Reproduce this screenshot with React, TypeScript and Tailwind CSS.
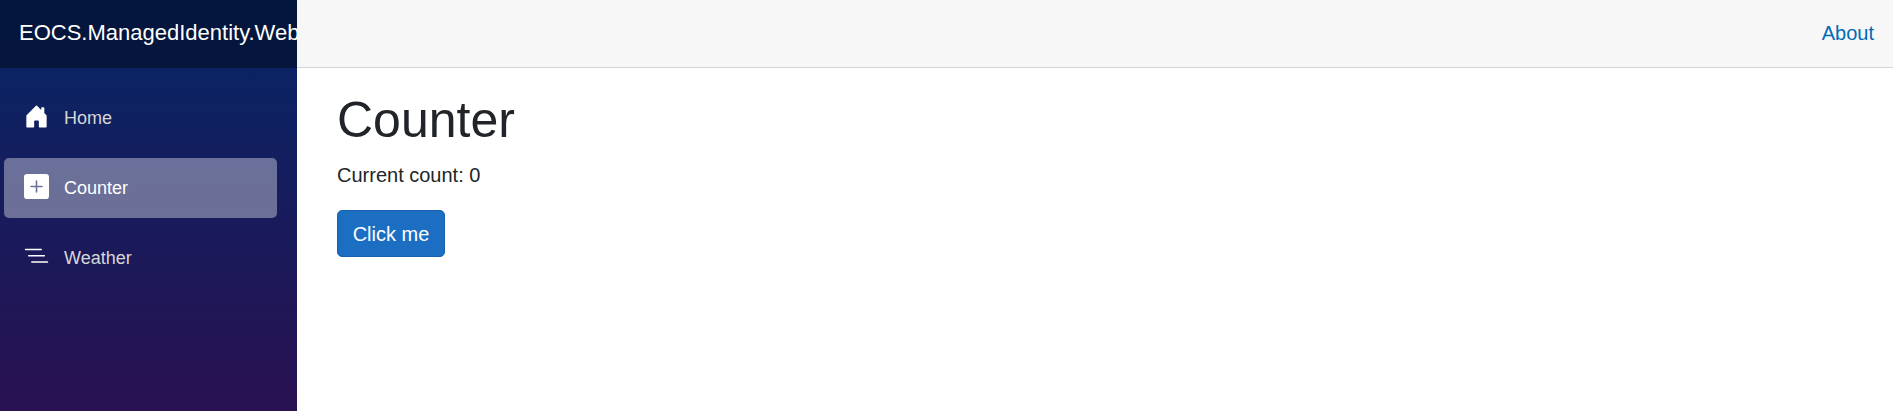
const linkBase = "flex items-center h-[60px] w-[273px] rounded-[5px] pl-5 text-[18px] leading-[60px]";
const iconClass = "w-[25px] h-[25px] -mt-[3px] mr-[15px] shrink-0";

function HomeIcon() {
  return (
    <svg viewBox="0 0 16 16" fill="white" className={iconClass}>
      <path d="M6.5 14.5v-3.505c0-.245.25-.495.5-.495h2c.25 0 .5.25.5.5v3.5a.5.5 0 0 0 .5.5h4a.5.5 0 0 0 .5-.5v-7a.5.5 0 0 0-.146-.354L13 5.793V2.5a.5.5 0 0 0-.5-.5h-1a.5.5 0 0 0-.5.5v1.293L8.354 1.146a.5.5 0 0 0-.708 0l-6 6A.5.5 0 0 0 1.5 7.5v7a.5.5 0 0 0 .5.5h4a.5.5 0 0 0 .5-.5Z" />
    </svg>
  );
}

function PlusIcon() {
  return (
    <svg viewBox="0 0 16 16" fill="white" className={iconClass}>
      <path d="M2 0a2 2 0 0 0-2 2v12a2 2 0 0 0 2 2h12a2 2 0 0 0 2-2V2a2 2 0 0 0-2-2H2zm6.5 4.5v3h3a.5.5 0 0 1 0 1h-3v3a.5.5 0 0 1-1 0v-3h-3a.5.5 0 0 1 0-1h3v-3a.5.5 0 0 1 1 0z" />
    </svg>
  );
}

function ListIcon() {
  return (
    <svg viewBox="0 0 16 16" fill="white" className={iconClass}>
      <path
        fillRule="evenodd"
        d="M4.5 11.5A.5.5 0 0 1 5 11h10a.5.5 0 0 1 0 1H5a.5.5 0 0 1-.5-.5zm-2-4A.5.5 0 0 1 3 7h10a.5.5 0 0 1 0 1H3a.5.5 0 0 1-.5-.5zm-2-4A.5.5 0 0 1 1 3h10a.5.5 0 0 1 0 1H1a.5.5 0 0 1-.5-.5z"
      />
    </svg>
  );
}

export default function App() {
  return (
    <div className="flex h-screen overflow-hidden bg-white font-['Liberation_Sans',Arial,sans-serif] text-[20px] leading-[30px] text-[#212529]">
      <aside className="w-[297px] shrink-0 bg-[linear-gradient(180deg,rgb(5,39,103)_0,#3a0647_604px)]">
        <div className="h-[68px] flex items-center pl-[19px] pb-[2px] bg-black/40 overflow-hidden whitespace-nowrap text-[22px] text-white">
          EOCS.ManagedIdentity.Web
        </div>
        <nav className="flex flex-col gap-[10px] pt-5 pl-1">
          <a className={`${linkBase} text-[#d7d7d7]`}>
            <HomeIcon />
            Home
          </a>
          <a className={`${linkBase} bg-white/37 text-white`}>
            <PlusIcon />
            Counter
          </a>
          <a className={`${linkBase} text-[#d7d7d7]`}>
            <ListIcon />
            Weather
          </a>
        </nav>
      </aside>
      <div className="flex-1 min-w-0">
        <header className="h-[68px] flex items-center justify-end pr-[19px] pb-[2px] bg-[#f7f7f7] border-b border-[#d6d5d5]">
          <a className="text-[#006bb7]">About</a>
        </header>
        <main className="pl-10 pt-[22px]">
          <h1 className="text-[50px] leading-[60px] font-medium mb-[10px]">Counter</h1>
          <p className="mb-5">Current count: 0</p>
          <button className="h-[47px] w-[108px] rounded-[5px] bg-[#1b6ec2] border border-[#1861ac] text-white">
            Click me
          </button>
        </main>
      </div>
    </div>
  );
}
